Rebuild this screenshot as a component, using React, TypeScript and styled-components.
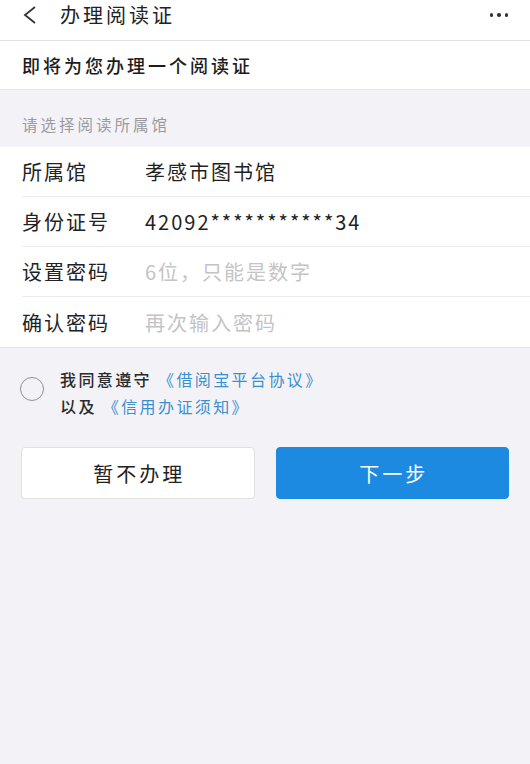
import styled, { createGlobalStyle } from 'styled-components'

const GlobalStyle = createGlobalStyle`
  html, body {
    margin: 0;
    padding: 0;
    background: #f3f3f7;
  }
  body {
    font-family: "Noto Sans CJK SC", "Noto Sans", sans-serif;
    color: #222;
  }
`

const rows = [
  { label: '所属馆', value: '孝感市图书馆', placeholder: false },
  { label: '身份证号', value: '42092***********34', placeholder: false },
  { label: '设置密码', value: '6位，只能是数字', placeholder: true },
  { label: '确认密码', value: '再次输入密码', placeholder: true },
]

function App() {
  return (
    <Page>
      <GlobalStyle />
      <NavBar>
        <BackBtn>
          <svg width="14" height="18" viewBox="0 0 14 18">
            <path d="M12 1 L2 9 L12 17" fill="none" stroke="#333" strokeWidth="1.8" />
          </svg>
        </BackBtn>
        <NavTitle>办理阅读证</NavTitle>
        <MoreDots>
          <Dot /><Dot /><Dot />
        </MoreDots>
      </NavBar>
      <Notice>即将为您办理一个阅读证</Notice>
      <SectionHint>请选择阅读所属馆</SectionHint>
      <FormList>
        {rows.map(row => (
          <FormRow key={row.label}>
            <RowLabel>{row.label}</RowLabel>
            <RowValue $placeholder={row.placeholder}>{row.value}</RowValue>
          </FormRow>
        ))}
      </FormList>
      <Agreement>
        <Radio />
        <AgreeText>
          <div>我同意遵守<AgreeLink>《借阅宝平台协议》</AgreeLink></div>
          <div>以及<AgreeLink>《信用办证须知》</AgreeLink></div>
        </AgreeText>
      </Agreement>
      <Buttons>
        <ActionBtn>暂不办理</ActionBtn>
        <ActionBtn $primary>下一步</ActionBtn>
      </Buttons>
    </Page>
  )
}

const Page = styled.div`
  min-height: 764px;
  background: #f3f3f7;
`
const NavBar = styled.header`
  height: 41px;
  background: #fff;
  display: flex;
  align-items: flex-start;
  padding: 2px 22px 0 23px;
  border-bottom: 1.5px solid #e2e2e2;
  box-sizing: border-box;
`
const BackBtn = styled.div`
  width: 14px;
  height: 18px;
  display: flex;
  margin-top: 4px;
`
const NavTitle = styled.h1`
  margin: 0 0 0 23px;
  font-size: 20px;
  line-height: 25px;
  font-weight: 400;
  color: #222;
  flex: 1;
  letter-spacing: 3px;
`
const MoreDots = styled.div`
  display: flex;
  gap: 4px;
  margin-top: 11px;
`
const Dot = styled.span`
  width: 3.5px;
  height: 3.5px;
  border-radius: 50%;
  background: #333;
`
const Notice = styled.div`
  background: #fff;
  height: 49px;
  display: flex;
  align-items: center;
  padding: 0 22px;
  font-size: 18px;
  font-weight: 500;
  color: #1c1c1c;
  border-bottom: 1px solid #e6e6e8;
  box-sizing: border-box;
  letter-spacing: 3px;
`
const SectionHint = styled.div`
  height: 57px;
  display: flex;
  align-items: center;
  padding: 10px 22px 0;
  box-sizing: border-box;
  font-size: 15.5px;
  color: #9a9a9e;
  letter-spacing: 3px;
`
const FormList = styled.div`
  background: #fff;
  border-bottom: 1px solid #e6e6e8;
`
const FormRow = styled.div`
  height: 50px;
  display: flex;
  align-items: center;
  margin-left: 22px;
  border-bottom: 1px solid #ececec;
  box-sizing: border-box;
  &:last-child {
    border-bottom: none;
  }
`
const RowLabel = styled.span`
  width: 123px;
  font-size: 20px;
  color: #222;
  letter-spacing: 2px;
`
const RowValue = styled.span<{ $placeholder?: boolean }>`
  font-size: 20px;
  color: ${p => (p.$placeholder ? '#c4c4c6' : '#1f1f1f')};
  letter-spacing: 2px;
`
const Agreement = styled.div`
  display: flex;
  align-items: center;
  padding: 18px 20px 0;
`
const Radio = styled.span`
  width: 22px;
  height: 22px;
  border: 1.6px solid #909090;
  border-radius: 50%;
  flex-shrink: 0;
  margin-top: -8px;
`
const AgreeText = styled.div`
  margin-left: 16px;
  font-size: 16px;
  font-weight: 500;
  color: #2a2a2a;
  line-height: 27px;
  letter-spacing: 2.4px;
`
const AgreeLink = styled.span`
  color: #3a90cf;
  font-weight: 400;
  margin-left: 6px;
`
const Buttons = styled.div`
  display: grid;
  grid-template-columns: 1fr 1fr;
  gap: 21px;
  padding: 27px 21px 0;
`
const ActionBtn = styled.button<{ $primary?: boolean }>`
  height: 52px;
  border-radius: 4px;
  font-family: inherit;
  font-size: 20px;
  letter-spacing: 3px;
  text-indent: 3px;
  border: 1px solid ${p => (p.$primary ? '#1b8ae0' : '#e0e0e0')};
  background: ${p => (p.$primary ? '#1b8ae0' : '#fff')};
  color: ${p => (p.$primary ? '#fff' : '#222')};
`

export default App
